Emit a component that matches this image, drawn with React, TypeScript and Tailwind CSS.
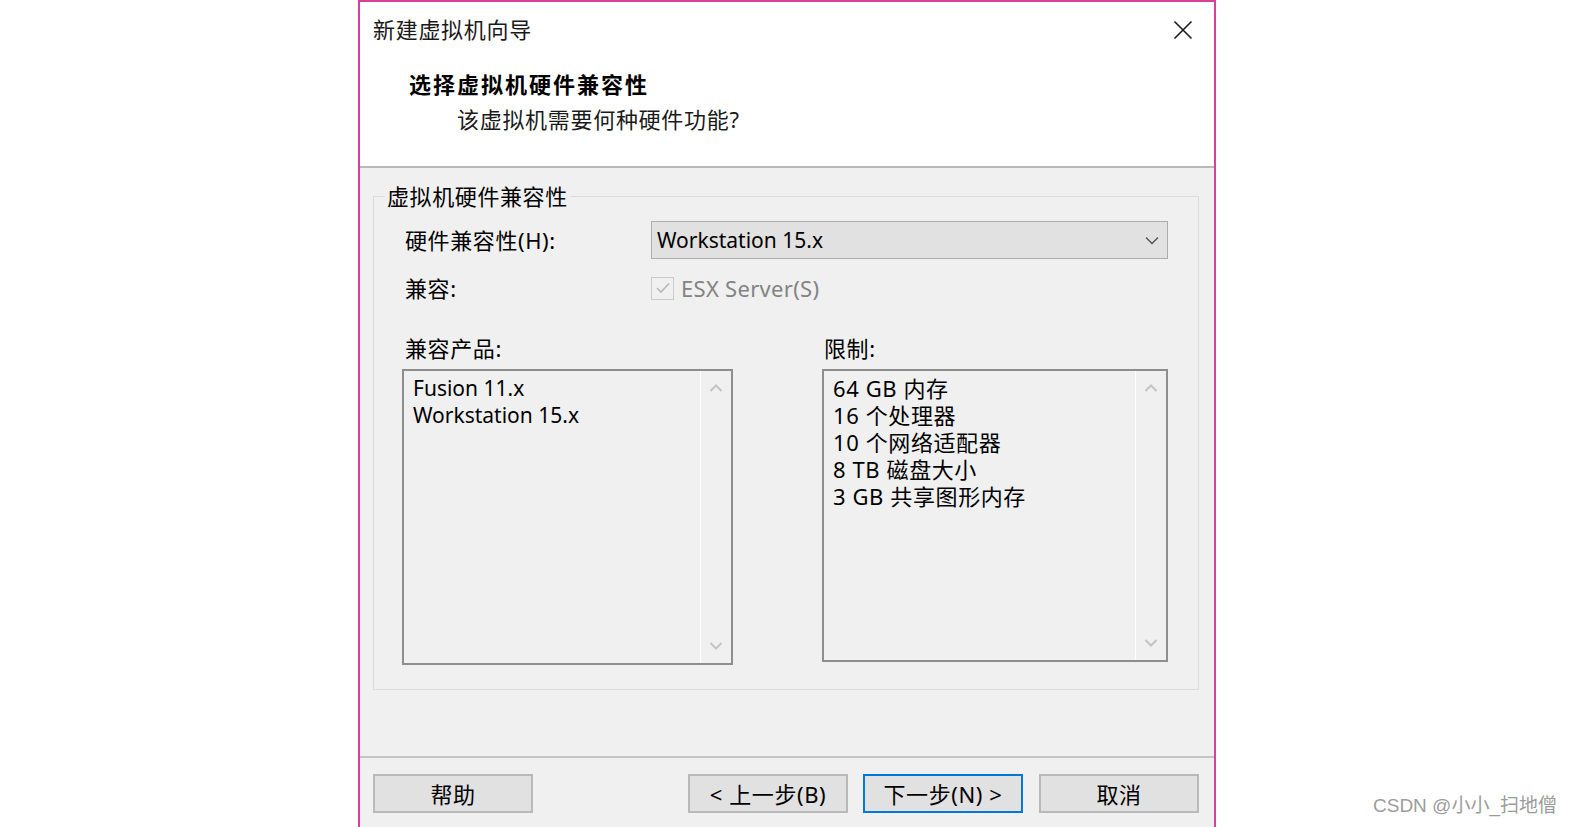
import React from 'react';

const font = "font-['Noto_Sans','Noto_Sans_CJK_SC',sans-serif]";

const Arrow = ({ dir }: { dir: 'up' | 'down' }) => (
  <svg width="14" height="9" viewBox="0 0 14 9">
    <path
      d={dir === 'up' ? 'M1.5 8 L7 2.5 L12.5 8' : 'M1.5 1 L7 6.5 L12.5 1'}
      fill="none"
      stroke="#c4c4c4"
      strokeWidth="2"
    />
  </svg>
);

interface ListBoxProps {
  items: string[];
  className: string;
}

const ListBox: React.FC<ListBoxProps> = ({ items, className }) => (
  <div className={`flex border-2 border-[#8e8e8e] bg-[#f0f0f0] ${className}`}>
    <div className="flex-1 pl-[9px] pt-[4px] text-[22px] leading-[27px] text-black">
      {items.map((item) => (
        <div key={item} className={/^[A-Za-z0-9 .]+$/.test(item) ? 'text-[21px]' : 'tracking-[0.6px]'}>
          {item}
        </div>
      ))}
    </div>
    <div className="flex w-[31px] flex-col items-center justify-between border-l border-white py-[12px]">
      <Arrow dir="up" />
      <Arrow dir="down" />
    </div>
  </div>
);

const Button = ({ label, primary, className = '' }: { label: string; primary?: boolean; className?: string }) => (
  <button
    className={`flex h-[39px] w-[160px] items-center justify-center bg-[#e1e1e1] text-[22px] leading-[32px] tracking-[0.6px] text-black ${
      primary ? 'border-2 border-[#0078d7]' : 'border-2 border-[#b9b9b9]'
    } ${className}`}
  >
    {label}
  </button>
);

export default function App() {
  return (
    <div className={`relative h-[827px] w-[1571px] overflow-hidden bg-white ${font}`}>
      <div className="ml-[358px] flex h-[827px] w-[858px] flex-col border-x-2 border-t-2 border-[#d6419b] bg-[#f0f0f0]">
        {/* header */}
        <div className="relative h-[166px] shrink-0 border-b-2 border-[#b9b9b9] bg-white">
          <div className="pl-[13px] pt-[11px] text-[22px] leading-[32px] tracking-[0.7px] text-[#1a1a1a]">新建虚拟机向导</div>
          <div className="mt-[23px] pl-[49px] text-[22px] font-bold leading-[32px] tracking-[2px] text-black">
            选择虚拟机硬件兼容性
          </div>
          <div className="mt-[3px] pl-[97px] text-[22px] leading-[32px] tracking-[0.7px] text-[#1a1a1a]">
            该虚拟机需要何种硬件功能?
          </div>
          <button className="absolute right-[20px] top-[17px] flex h-[22px] w-[22px] items-center justify-center" aria-label="关闭">
            <svg width="20" height="20" viewBox="0 0 20 20">
              <path d="M1.5 1.5 L18.5 18.5 M18.5 1.5 L1.5 18.5" stroke="#1a1a1a" strokeWidth="1.6" />
            </svg>
          </button>
        </div>

        {/* body */}
        <div className="h-[588px] shrink-0 pt-[12px]">
          <fieldset className="ml-[13px] mr-[15px] border border-[#dcdcdc] pb-[24px] pl-[11px]">
            <legend className="px-[2px] text-[22px] leading-[32px] tracking-[0.6px] text-black">虚拟机硬件兼容性</legend>
            <div className="pl-[17px] pt-[9px] text-[22px] leading-[32px] text-black">
              <div className="flex h-[38px] items-center">
                <div className="w-[249px] pl-[3px] tracking-[0.6px]">硬件兼容性(H):</div>
                <div className="flex h-[38px] w-[517px] items-center justify-between border border-[#adadad] bg-[#e1e1e1] pl-[5px] pr-[8px]">
                  <span className="text-[21px]">Workstation 15.x</span>
                  <svg width="14" height="9" viewBox="0 0 14 9">
                    <path d="M1 1.5 L7 7.5 L13 1.5" fill="none" stroke="#505050" strokeWidth="1.3" />
                  </svg>
                </div>
              </div>
              <div className="mt-[13px] flex h-[32px] items-center">
                <div className="w-[249px] pl-[3px] tracking-[0.6px]">兼容:</div>
                <div className="flex h-[23px] w-[23px] items-center justify-center border border-[#cacaca] bg-[#f0f0f0]">
                  <svg width="16" height="14" viewBox="0 0 16 14">
                    <path d="M2 7 L6 11 L14 2.5" fill="none" stroke="#b8b8b8" strokeWidth="1.6" />
                  </svg>
                </div>
                <span className="ml-[7px] tracking-[0.3px] text-[#838383]">ESX Server(S)</span>
              </div>
              <div className="mt-[28px] flex tracking-[0.6px]">
                <div className="w-[420px] pl-[3px]">兼容产品:</div>
                <div className="pl-[2px]">限制:</div>
              </div>
              <div className="mt-[5px] flex items-start">
                <ListBox items={['Fusion 11.x', 'Workstation 15.x']} className="h-[296px] w-[331px]" />
                <ListBox
                  items={['64 GB 内存', '16 个处理器', '10 个网络适配器', '8 TB 磁盘大小', '3 GB 共享图形内存']}
                  className="ml-[89px] h-[293px] w-[346px]"
                />
              </div>
            </div>
          </fieldset>
        </div>

        {/* footer */}
        <div className="flex-1 border-t-2 border-[#c4c4c4] pl-[13px] pt-[16px]">
          <div className="flex">
            <Button label="帮助" />
            <Button label="< 上一步(B)" className="ml-[155px]" />
            <Button label="下一步(N) >" primary className="ml-[15px]" />
            <Button label="取消" className="ml-[16px]" />
          </div>
        </div>
      </div>

      <div className="absolute left-[1373px] top-[794px] font-['Liberation_Sans','Noto_Sans_CJK_SC',sans-serif] text-[19px] leading-[24px] text-[#9c9c9c]">
        CSDN @小小_扫地僧
      </div>
    </div>
  );
}
